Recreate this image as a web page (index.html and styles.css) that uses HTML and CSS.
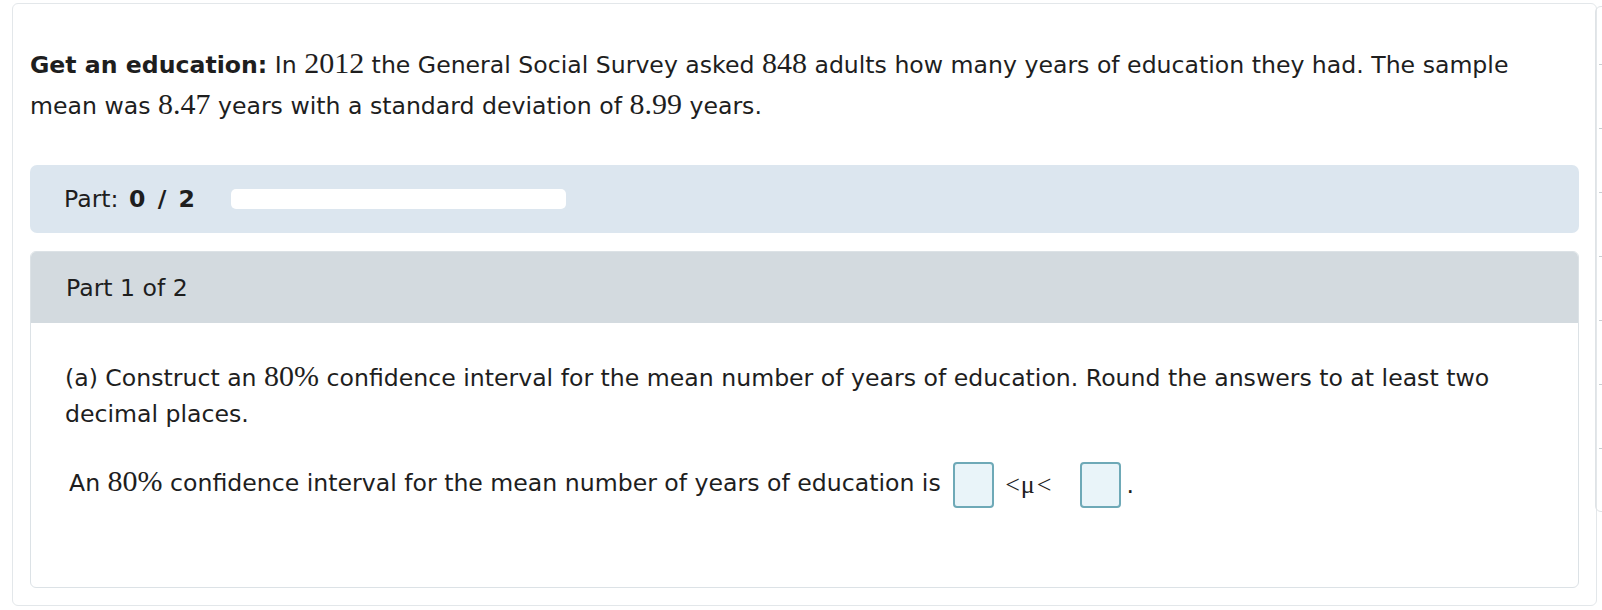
FILE: index.html
```html
<!DOCTYPE html>
<html>
<head>
<meta charset="utf-8">
<link rel="stylesheet" href="styles.css">
</head>
<body>
<div class="page">
  <p class="intro"><b>Get an education:</b> In <span class="m">2012</span> the General Social Survey asked <span class="m">848</span> adults how many years of education they had. The sample mean was <span class="m">8.47</span> years with a standard deviation of <span class="m">8.99</span> years.</p>

  <div class="progress">
    <span class="plabel">Part: <b>0 / 2</b></span>
    <div class="pbar"></div>
  </div>

  <div class="card">
    <div class="card-head">Part 1 of 2</div>
    <div class="card-body">
      <p class="q">(a) Construct an <span class="m">80%</span> confidence interval for the mean number of years of education. Round the answers to at least two decimal places.</p>
      <p class="ans">An <span class="m">80%</span> confidence interval for the mean number of years of education is <span class="box"></span><span class="rel r1">&lt;</span><span class="mu">μ</span><span class="rel r2">&lt;</span><span class="box b2"></span><span class="dot">.</span></p>
    </div>
  </div>
</div>
<div class="side">
  <i class="tick"></i><i class="tick"></i><i class="tick"></i><i class="tick"></i><i class="tick"></i><i class="tick"></i><i class="tick"></i>
</div>
</body>
</html>
```
FILE: styles.css
```css
html, body {
  margin: 0;
  padding: 0;
  background: #fff;
  overflow: hidden;
}
body {
  font-family: "DejaVu Sans", Verdana, sans-serif;
  color: #1e1e1e;
  font-size: 23.6px;
  width: 1602px;
  height: 610px;
  position: relative;
}
.page {
  box-sizing: border-box;
  margin: 3px 0 0 12px;
  width: 1585px;
  height: 603px;
  border: 1px solid #e3e7ea;
  border-radius: 6px;
  padding: 0 17px;
}
.intro {
  margin: 41px 0 0 0;
  padding-right: 30px;
  line-height: 41px;
}
.m {
  font-family: "Liberation Serif", "Times New Roman", serif;
  font-size: 30px;
  line-height: 1;
}
.progress {
  margin-top: 38px;
  height: 68px;
  background: #dce6ef;
  border-radius: 7px;
  display: flex;
  align-items: center;
  padding-left: 34px;
}
.plabel {
  white-space: nowrap;
  word-spacing: 3px;
}
.plabel b {
  letter-spacing: 0.5px;
}
.pbar {
  margin-left: 36px;
  width: 335px;
  height: 20px;
  background: #fff;
  border-radius: 5px;
}
.card {
  margin-top: 18px;
  border: 1px solid #dce2e6;
  border-radius: 6px;
  overflow: hidden;
  height: 337px;
  box-sizing: border-box;
}
.card-head {
  height: 71px;
  background: #d3dadf;
  display: flex;
  align-items: center;
  padding-left: 35px;
}
.card-body {
  padding: 0 34px;
}
.q {
  margin: 37px 0 0 0;
  line-height: 36px;
}
.ans {
  margin: 28px 0 0 4px;
  line-height: 46px;
  white-space: nowrap;
}
.box {
  display: inline-block;
  vertical-align: middle;
  box-sizing: border-box;
  width: 41px;
  height: 46px;
  border: 2px solid #6ea9b7;
  background: #e9f4f9;
  border-radius: 4px;
  margin-left: 5px;
}
.rel, .mu {
  display: inline-block;
  vertical-align: middle;
  font-family: "Liberation Serif", "Times New Roman", serif;
  font-size: 26px;
  line-height: 46px;
}
.r1 { margin-left: 11px; }
.mu { margin-left: 1px; }
.r2 { margin-left: 2px; }
.box.b2 { margin-left: 29px; }
.dot { margin-left: 5px; vertical-align: middle; }
.side {
  position: absolute;
  left: 1595px;
  top: 6px;
  width: 20px;
  height: 506px;
  box-sizing: border-box;
  border: 1px solid #dfe3e6;
  border-radius: 6px;
  padding-top: 57px;
  display: flex;
  flex-direction: column;
  gap: 63px;
}
.tick {
  display: block;
  margin-left: 3px;
  width: 4px;
  height: 1px;
  background: #c9ced2;
}
```
